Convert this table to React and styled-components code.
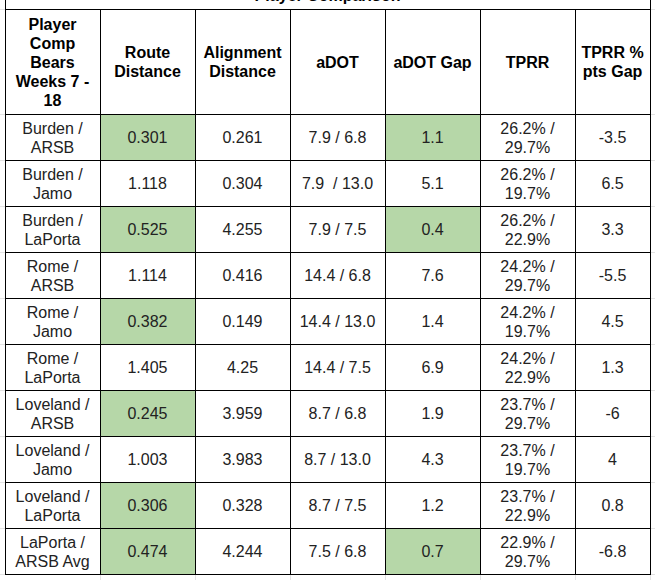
import React from "react";
import styled, { createGlobalStyle } from "styled-components";

const Global = createGlobalStyle`
  html, body { margin: 0; padding: 0; background: #fff; }
  body { overflow: hidden; width: 655px; height: 580px; }
`;

const Sheet = styled.div`
  width: 655px;
  height: 580px;
  overflow: hidden;
  background: #fff;
`;

const Table = styled.table`
  border-collapse: collapse;
  table-layout: fixed;
  width: 655px;
  margin-top: -21px;
  font-family: "Liberation Sans", Arial, sans-serif;
  font-size: 16px;
  line-height: 19px;
`;

const TitleRow = styled.tr`
  height: 30px;
`;

const TitleCell = styled.td`
  border: 1px solid #000;
  border-top: none;
  font-weight: bold;
  color: #000;
  text-align: center;
  vertical-align: bottom;
  padding: 0 0 4px 0;
`;

const Ghost = styled.td`
  padding: 0;
  border: none;
  border-top: 1px solid ${(p) => (p.$top ? "#e2e2e2" : "transparent")};
  border-left: ${(p) => (p.$side ? "1px solid #e2e2e2" : "none")};
`;

const HeadCell = styled.th`
  border: 1px solid #000;
  padding: 0 3px;
  font-weight: bold;
  color: #000;
  text-align: center;
  vertical-align: middle;
  white-space: pre-line;
`;

const Cell = styled.td`
  border: 1px solid #000;
  padding: 0 3px;
  color: #222;
  text-align: center;
  vertical-align: middle;
  white-space: pre-wrap;
  background: ${(p) => (p.$hl ? "#b6d7a8" : "#fff")};
`;

const HeadRow = styled.tr`
  height: 105px;
`;

const DataRow = styled.tr`
  height: 46px;
`;

const headers = [
  "Player\nComp\nBears\nWeeks 7 -\n18",
  "Route\nDistance",
  "Alignment\nDistance",
  "aDOT",
  "aDOT Gap",
  "TPRR",
  "TPRR %\npts Gap",
];

const rows = [
  ["Burden /\nARSB", "0.301", "0.261", "7.9 / 6.8", "1.1", "26.2% /\n29.7%", "-3.5", [1, 4]],
  ["Burden /\nJamo", "1.118", "0.304", "7.9  / 13.0", "5.1", "26.2% /\n19.7%", "6.5", []],
  ["Burden /\nLaPorta", "0.525", "4.255", "7.9 / 7.5", "0.4", "26.2% /\n22.9%", "3.3", [1, 4]],
  ["Rome /\nARSB", "1.114", "0.416", "14.4 / 6.8", "7.6", "24.2% /\n29.7%", "-5.5", []],
  ["Rome /\nJamo", "0.382", "0.149", "14.4 / 13.0", "1.4", "24.2% /\n19.7%", "4.5", [1]],
  ["Rome /\nLaPorta", "1.405", "4.25", "14.4 / 7.5", "6.9", "24.2% /\n22.9%", "1.3", []],
  ["Loveland /\nARSB", "0.245", "3.959", "8.7 / 6.8", "1.9", "23.7% /\n29.7%", "-6", [1]],
  ["Loveland /\nJamo", "1.003", "3.983", "8.7 / 13.0", "4.3", "23.7% /\n19.7%", "4", []],
  ["Loveland /\nLaPorta", "0.306", "0.328", "8.7 / 7.5", "1.2", "23.7% /\n22.9%", "0.8", [1]],
  ["LaPorta /\nARSB Avg", "0.474", "4.244", "7.5 / 6.8", "0.7", "22.9% /\n29.7%", "-6.8", [1, 4]],
];

const widths = [5, 95, 95, 95, 95, 95, 95, 75, 5];

export default function App() {
  return (
    <Sheet>
      <Global />
      <Table>
        <colgroup>
          {widths.map((w, i) => (
            <col key={i} style={{ width: w }} />
          ))}
        </colgroup>
        <tbody>
          <TitleRow>
            <Ghost />
            <TitleCell colSpan={7}>Player Comparison</TitleCell>
            <Ghost />
          </TitleRow>
          <HeadRow>
            <Ghost $top />
            {headers.map((h, i) => (
              <HeadCell key={i}>{h}</HeadCell>
            ))}
            <Ghost $top />
          </HeadRow>
          {rows.map((r, ri) => {
            const hl = r[7];
            return (
              <DataRow key={ri}>
                <Ghost $top />
                {r.slice(0, 7).map((v, ci) => (
                  <Cell key={ci} $hl={hl.includes(ci)}>
                    {v}
                  </Cell>
                ))}
                <Ghost $top />
              </DataRow>
            );
          })}
          <DataRow>
            <Ghost $top />
            {widths.slice(1, 8).map((_, i) => (
              <Ghost key={i} $side={i > 0} />
            ))}
            <Ghost $top $side />
          </DataRow>
        </tbody>
      </Table>
    </Sheet>
  );
}
